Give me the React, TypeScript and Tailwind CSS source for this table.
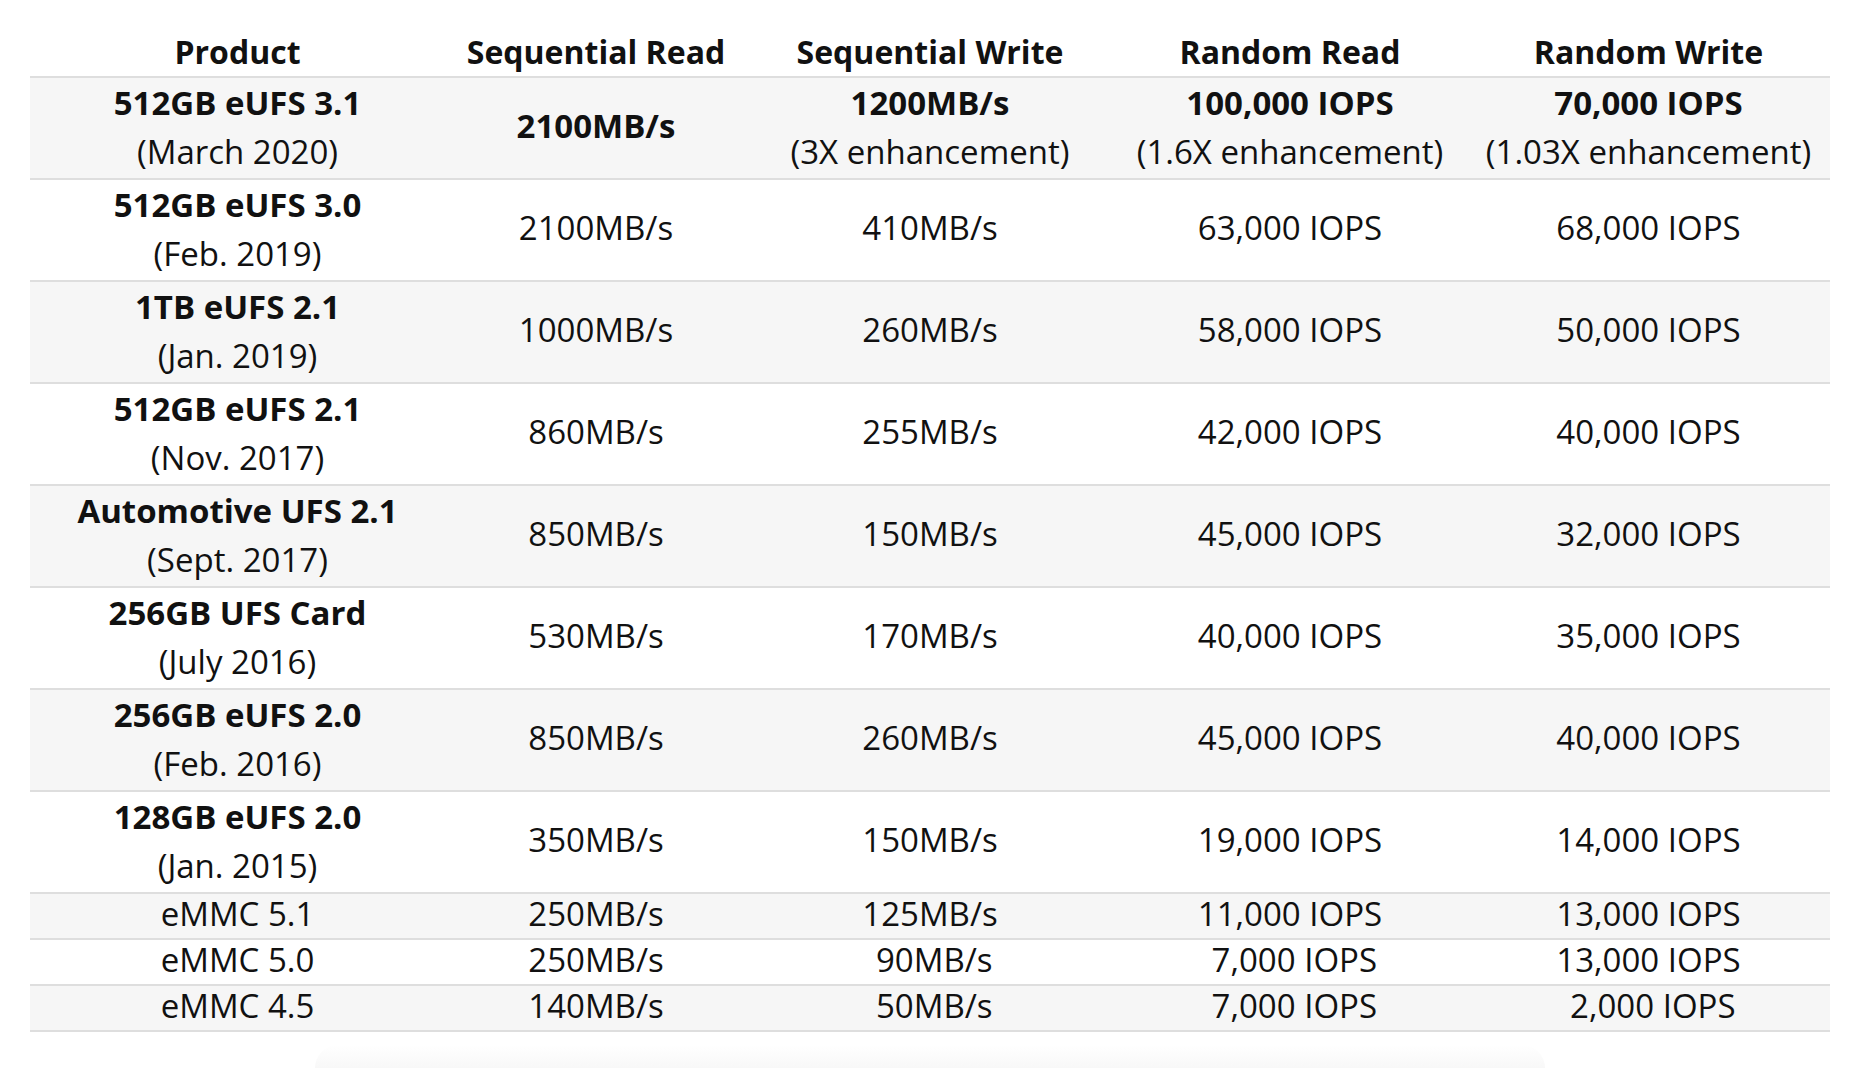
const cols = 'grid grid-cols-[415px_302px_366px_354px_363px]';

type Cell = { main: string; sub?: string; bold?: boolean };

const headers = ['Product', 'Sequential Read', 'Sequential Write', 'Random Read', 'Random Write'];

const tallRows: Cell[][] = [
  [
    { main: '512GB eUFS 3.1', sub: '(March 2020)', bold: true },
    { main: '2100MB/s', bold: true },
    { main: '1200MB/s', sub: '(3X enhancement)', bold: true },
    { main: '100,000 IOPS', sub: '(1.6X enhancement)', bold: true },
    { main: '70,000 IOPS', sub: '(1.03X enhancement)', bold: true },
  ],
  [
    { main: '512GB eUFS 3.0', sub: '(Feb. 2019)', bold: true },
    { main: '2100MB/s' },
    { main: '410MB/s' },
    { main: '63,000 IOPS' },
    { main: '68,000 IOPS' },
  ],
  [
    { main: '1TB eUFS 2.1', sub: '(Jan. 2019)', bold: true },
    { main: '1000MB/s' },
    { main: '260MB/s' },
    { main: '58,000 IOPS' },
    { main: '50,000 IOPS' },
  ],
  [
    { main: '512GB eUFS 2.1', sub: '(Nov. 2017)', bold: true },
    { main: '860MB/s' },
    { main: '255MB/s' },
    { main: '42,000 IOPS' },
    { main: '40,000 IOPS' },
  ],
  [
    { main: 'Automotive UFS 2.1', sub: '(Sept. 2017)', bold: true },
    { main: '850MB/s' },
    { main: '150MB/s' },
    { main: '45,000 IOPS' },
    { main: '32,000 IOPS' },
  ],
  [
    { main: '256GB UFS Card', sub: '(July 2016)', bold: true },
    { main: '530MB/s' },
    { main: '170MB/s' },
    { main: '40,000 IOPS' },
    { main: '35,000 IOPS' },
  ],
  [
    { main: '256GB eUFS 2.0', sub: '(Feb. 2016)', bold: true },
    { main: '850MB/s' },
    { main: '260MB/s' },
    { main: '45,000 IOPS' },
    { main: '40,000 IOPS' },
  ],
  [
    { main: '128GB eUFS 2.0', sub: '(Jan. 2015)', bold: true },
    { main: '350MB/s' },
    { main: '150MB/s' },
    { main: '19,000 IOPS' },
    { main: '14,000 IOPS' },
  ],
];

const shortRows: string[][] = [
  ['eMMC 5.1', '250MB/s', '125MB/s', '11,000 IOPS', '13,000 IOPS'],
  ['eMMC 5.0', '250MB/s', '\u00a090MB/s', '\u00a07,000 IOPS', '13,000 IOPS'],
  ['eMMC 4.5', '140MB/s', '\u00a050MB/s', '\u00a07,000 IOPS', '\u00a02,000 IOPS'],
];

export default function App() {
  return (
    <div className="min-h-screen bg-white font-['Open_Sans',sans-serif] text-[33px] text-[#111]">
      <div className="w-[1800px] ml-[30px]">
        <div className={`${cols} h-[76px] pt-[28px] leading-[48px] text-[32px] font-bold text-center`}>
          {headers.map((h) => (
            <div key={h}>{h}</div>
          ))}
        </div>

        {tallRows.map((row, i) => (
          <div
            key={i}
            className={`${cols} h-[102px] border-t-2 border-[#dedede] ${i % 2 === 0 ? 'bg-[#f6f6f6]' : 'bg-white'}`}
          >
            {row.map((c, j) => (
              <div
                key={j}
                className={`flex flex-col items-center justify-center leading-[49px] whitespace-nowrap ${c.sub ? 'pb-[2px]' : 'pb-[5px]'}`}
              >
                <span className={c.bold ? 'font-bold' : ''}>{c.main}</span>
                {c.sub && <span>{c.sub}</span>}
              </div>
            ))}
          </div>
        ))}

        {shortRows.map((row, i) => (
          <div
            key={i}
            className={`${cols} h-[46px] border-t-2 border-[#dedede] ${i % 2 === 0 ? 'bg-[#f6f6f6]' : 'bg-white'} ${i === shortRows.length - 1 ? 'h-[48px] border-b-2' : ''}`}
          >
            {row.map((t, j) => (
              <div key={j} className="flex items-center justify-center pb-[4px] leading-[40px] whitespace-pre">
                {t}
              </div>
            ))}
          </div>
        ))}

        <div className="mx-[285px] mt-[13px] h-[23px] rounded-t-[40px] bg-gradient-to-b from-white to-[#f8f8f8]" />
      </div>
    </div>
  );
}
